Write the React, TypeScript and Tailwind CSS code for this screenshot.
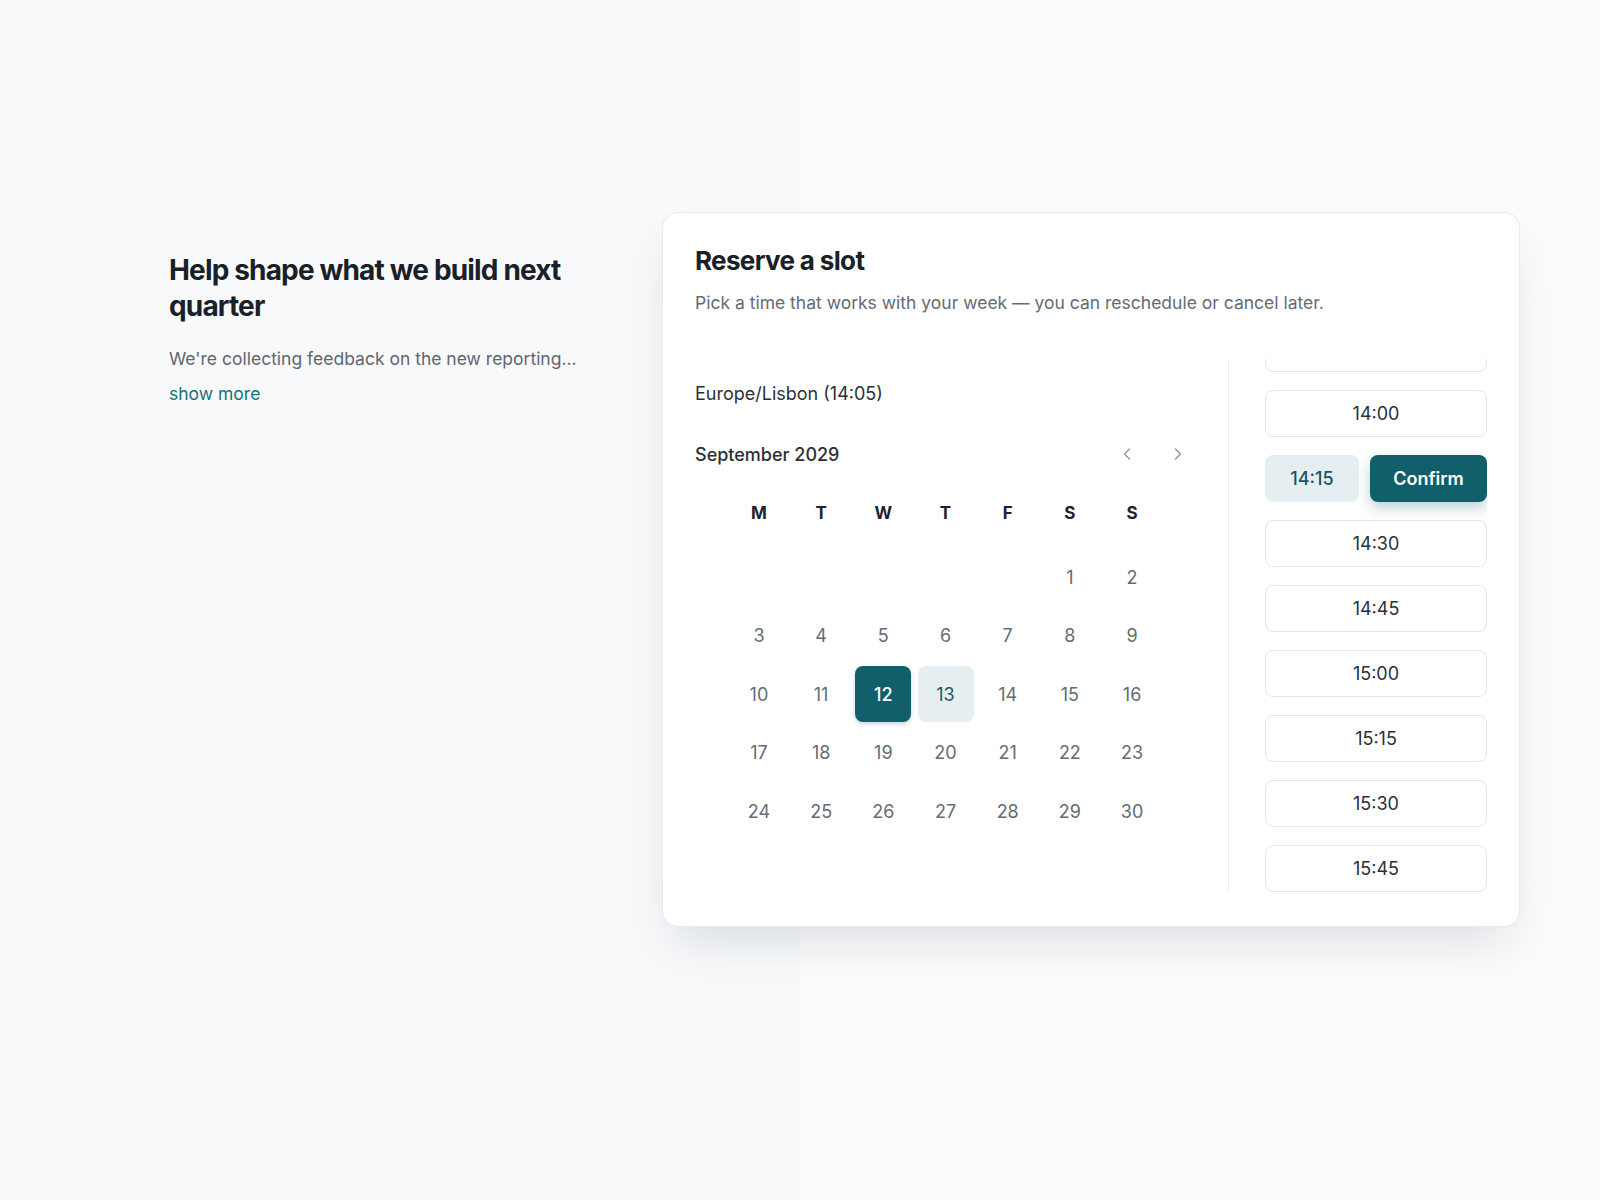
import { useLayoutEffect, useRef } from "react";
import { ChevronLeft, ChevronRight } from "lucide-react";

const WEEKDAYS = ["M", "T", "W", "T", "F", "S", "S"];

// September 2029 starts on a Saturday
const LEADING_BLANKS = 5;
const DAYS_IN_MONTH = 30;

const SLOTS = ["13:45", "14:00", "14:15", "14:30", "14:45", "15:00", "15:15", "15:30", "15:45"];

function DayCell({ day }: { day: number }) {
  if (day === 12) {
    return (
      <button className="h-14 w-14 rounded-lg bg-[#125f6c] text-[18px] font-medium text-white shadow-[0_2px_4px_rgba(18,95,108,0.25)]">
        {day}
      </button>
    );
  }
  if (day === 13) {
    return (
      <button className="h-14 w-14 rounded-lg bg-[#e6eef1] text-[18px] text-[#1d5966]">
        {day}
      </button>
    );
  }
  return (
    <button className="h-14 w-14 rounded-lg text-[18px] text-[#656c73]">
      {day}
    </button>
  );
}

function Calendar() {
  const cells: (number | null)[] = [
    ...Array.from({ length: LEADING_BLANKS }, () => null),
    ...Array.from({ length: DAYS_IN_MONTH }, (_, i) => i + 1),
  ];

  return (
    <div className="flex flex-col items-center pl-1">
      <div className="mt-[14px] grid grid-cols-[repeat(7,56px)] gap-x-[6.2px]">
        {WEEKDAYS.map((d, i) => (
          <div
            key={i}
            className="flex h-14 items-center justify-center text-[17px] font-bold text-[#1e2329]"
          >
            {d}
          </div>
        ))}
      </div>
      <div className="mt-[7px] grid grid-cols-[repeat(7,56px)] gap-x-[6.2px] gap-y-[2.5px]">
        {cells.map((day, i) =>
          day === null ? (
            <div key={i} className="h-14 w-14" />
          ) : (
            <DayCell key={i} day={day} />
          )
        )}
      </div>
    </div>
  );
}

function TimeSlots() {
  const listRef = useRef<HTMLDivElement>(null);
  const anchorRef = useRef<HTMLButtonElement>(null);

  useLayoutEffect(() => {
    // keep the selected slot in view, with 14:00 just below the top edge
    if (listRef.current && anchorRef.current) {
      listRef.current.scrollTop = anchorRef.current.offsetTop - 30;
    }
  }, []);

  return (
    <div
      ref={listRef}
      className="relative flex h-full flex-col gap-[18px] overflow-y-auto [scrollbar-width:none]"
    >
      {SLOTS.map((slot) =>
        slot === "14:15" ? (
          <div key={slot} className="flex h-[47px] shrink-0 gap-[11px]">
            <button className="w-[94px] rounded-lg bg-[#e6eef1] text-[18px] font-medium text-[#1b5563]">
              {slot}
            </button>
            <button className="flex-1 rounded-lg bg-[#125f6c] text-[18px] font-semibold text-white shadow-[0_6px_14px_rgba(18,95,108,0.28)]">
              Confirm
            </button>
          </div>
        ) : (
          <button
            key={slot}
            ref={slot === "14:00" ? anchorRef : undefined}
            className="h-[47px] shrink-0 rounded-lg border border-[#e2e5e9] bg-white text-[18px] text-[#2b3036]"
          >
            {slot}
          </button>
        )
      )}
    </div>
  );
}

export default function App() {
  return (
    <div className="min-h-screen w-full bg-[linear-gradient(to_right,#f7f9fb_50%,#fafbfc_50%)] font-['Inter','Liberation_Sans',sans-serif] antialiased">
      <main className="flex items-start pl-[169px] pt-[212px]">
        <section className="mt-10 w-[440px]">
          <h1 className="text-[28px] font-bold leading-9 tracking-[-0.03em] text-[#1a2027]">
            Help shape what we build next quarter
          </h1>
          <p className="mt-[23px] text-[17.5px] leading-6 text-[#5f676f]">
            We're collecting feedback on the new reporting...
          </p>
          <button className="mt-[11px] text-[17.5px] leading-6 text-[#17707a]">
            show more
          </button>
        </section>

        <div className="ml-[53px] w-[858px] rounded-2xl border border-[#e8ebee] bg-white px-8 pb-[34px] pt-8 shadow-[0_24px_50px_-14px_rgba(15,23,42,0.14)]">
          <h2 className="text-[26px] font-bold leading-8 tracking-tight text-[#1a2027]">
            Reserve a slot
          </h2>
          <p className="mt-[14px] text-[17.5px] leading-6 text-[#646b73]">
            Pick a time that works with your week — you can reschedule or cancel later.
          </p>

          <div className="mt-[44px] flex h-[533px]">
            <div className="flex-1 pr-9 pt-[23px]">
              <div className="text-[18px] leading-6 text-[#2b3036]">
                Europe/Lisbon (14:05)
              </div>
              <div className="-mr-1 mt-[30px] flex h-9 items-center justify-between">
                <span className="text-[18px] font-medium text-[#2b3036]">
                  September 2029
                </span>
                <div className="flex gap-[15px]">
                  <button className="flex h-9 w-9 items-center justify-center text-[#8b9197]">
                    <ChevronLeft size={20} strokeWidth={1.5} />
                  </button>
                  <button className="flex h-9 w-9 items-center justify-center text-[#8b9197]">
                    <ChevronRight size={20} strokeWidth={1.5} />
                  </button>
                </div>
              </div>
              <Calendar />
            </div>

            <div className="w-[259px] border-l border-[#eceef1] pl-9">
              <TimeSlots />
            </div>
          </div>
        </div>
      </main>
    </div>
  );
}
